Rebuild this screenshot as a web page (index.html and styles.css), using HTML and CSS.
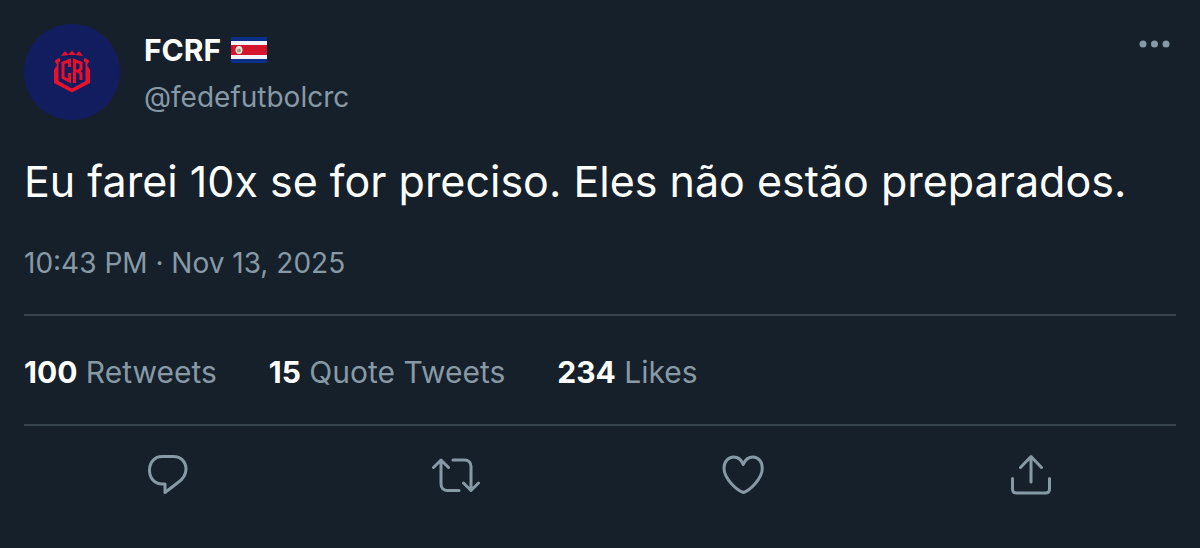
FILE: index.html
```html
<!DOCTYPE html>
<html lang="pt">
<head>
    <meta charset="UTF-8">
    <meta name="viewport" content="width=device-width, initial-scale=1">
    <title>FCRF</title>
    <link rel="stylesheet" href="styles.css">
</head>
<body>
<article class="tweet">
    <header class="head">
        <svg class="avatar" viewBox="0 0 96 96" aria-hidden="true">
            <circle cx="48" cy="48" r="48" fill="#121d60"/>
            <g fill="#e8102a">
                <path d="M37 32l4-5 3.500 4zM44 31l4-4.500 4 4.500zM51.500 31l3.500-4 4 5z"/>
                <path d="M35.500 33.500l-4.500 3c0 2 1 3 2 4.500-.5 2-2.500 3-3 5V59l18 9.500L66 59V46c-.5-2-2.500-3-3-5 1-1.500 2-2.500 2-4.500l-4.500-3-1 3.500 2 1.500V57L48 64.500 34.500 57V38.500l2-1.500z"/>
            </g>
            <g fill="none" stroke="#e8102a" stroke-width="3">
                <path d="M45.500 43v-6.500L39 39v14.500l6.500 3.500v-8"/>
                <path d="M50.500 59V36.500L57 39v6l-2.500 2H51M54 47l3 2.500V56"/>
            </g>
        </svg>
        <div class="user">
            <div class="name">
                <a href="#">FCRF</a>
                <svg class="flag" viewBox="0 0 36 26" role="img" aria-label="Costa Rica">
                    <rect width="36" height="26" rx="1" fill="#0a2f86"/>
                    <rect y="4" width="36" height="18" fill="#f4f2f6"/>
                    <rect y="8" width="36" height="10" fill="#d4142a"/>
                    <ellipse cx="8" cy="13" rx="3.500" ry="4" fill="#e9e4dc"/>
                    <ellipse cx="8" cy="13.500" rx="2" ry="2" fill="#9c9a80"/>
                </svg>
            </div>
            <a class="handle" href="#">@fedefutbolcrc</a>
        </div>
        <button class="more" type="button" aria-label="More">
            <svg viewBox="0 0 32 8"><circle cx="5" cy="4" r="3.500"/><circle cx="16.500" cy="4" r="3.500"/><circle cx="28" cy="4" r="3.500"/></svg>
        </button>
    </header>
    <p class="text">Eu farei 10x se for preciso. Eles não estão preparados.</p>
    <time class="date" datetime="2025-11-13T22:43">10:43 PM · Nov 13, 2025</time>
    <div class="stats">
        <a href="#"><b>100</b> Retweets</a>
        <a href="#"><b>15</b> Quote Tweets</a>
        <a href="#"><b>234</b> Likes</a>
    </div>
    <div class="actions">
        <button type="button" aria-label="Reply">
            <svg viewBox="0 0 48 48"><path d="M18 5.500h11.500C37 5.500 42 11 42 18c0 6-3 10-8 13.500L21 41.500V33h-3C10.500 33 5.500 27 5.500 19.200S10.500 5.500 18 5.500z"/></svg>
        </button>
        <button type="button" aria-label="Retweet">
            <svg viewBox="0 0 48 48"><path d="M1.500 16.500L9 9l7.500 7.500M9 10v23c0 4 2.500 6.500 6.500 6.500H27M21 9h11.500c4 0 6.500 2.500 6.500 6.500v23M31.500 32l7.500 7.500 7.500-7.500"/></svg>
        </button>
        <button type="button" aria-label="Like">
            <svg viewBox="0 0 48 48"><path d="M23.500 41.500C18 40 4 28.500 4 17 4 10.500 8.500 6 13.500 6c4.500 0 8 3 9.700 7.500C25 9 28.500 6 33 6c5 0 9.300 4.500 9.300 11 0 11.500-13.500 23-18.800 24.500z"/></svg>
        </button>
        <button type="button" aria-label="Share">
            <svg viewBox="0 0 48 48"><path d="M12.500 16.500L23 5.500l10.500 11M23 6v25M4.500 27.500V38c0 2.500 1.500 4 4 4h29c2.500 0 4-1.500 4-4V27.500"/></svg>
        </button>
    </div>
</article>
</body>
</html>
```
FILE: styles.css
```css
*{
    margin: 0;
    padding: 0;
    box-sizing: border-box;
}
body{
    background: #16202a;
    color: #fff;
    font-family: Inter, "Liberation Sans", sans-serif;
    font-size: 30px;
    line-height: 40px;
}
a{
    color: inherit;
    text-decoration: none;
}
button{
    border: none;
    background: none;
    cursor: pointer;
}
svg{
    display: block;
}
.tweet{
    padding: 24px;
}
.head{
    display: flex;
    align-items: flex-start;
    gap: 24px;
}
.avatar{
    width: 96px;
    height: 96px;
}
.user{
    flex: 1;
    padding-top: 6px;
}
.name{
    display: flex;
    align-items: center;
    gap: 10px;
    margin-bottom: 6px;
    font-weight: 700;
}
.flag{
    width: 36px;
    height: 26px;
}
.handle,
.date,
.stats{
    color: #8899a6;
}
.handle,
.date{
    font-size: 28px;
}
.more{
    padding: 16px 6px;
}
.more svg{
    width: 32px;
    height: 8px;
    fill: #8899a6;
}
.text{
    margin-top: 31px;
    font-size: 43px;
    line-height: 60px;
}
.date{
    display: block;
    margin-top: 32px;
}
.stats{
    display: flex;
    flex-wrap: wrap;
    gap: 52px;
    margin-top: 31px;
    padding: 36px 0 32px;
    border-top: 2px solid #38444d;
    border-bottom: 2px solid #38444d;
}
.stats b{
    color: #fff;
    font-weight: 700;
}
.actions{
    display: grid;
    grid-template-columns: repeat(4, 1fr);
    justify-items: center;
    padding-top: 25px;
}
.actions svg{
    width: 48px;
    height: 48px;
    fill: none;
    stroke: #8899a6;
    stroke-width: 3;
    stroke-linecap: round;
    stroke-linejoin: round;
}
```
